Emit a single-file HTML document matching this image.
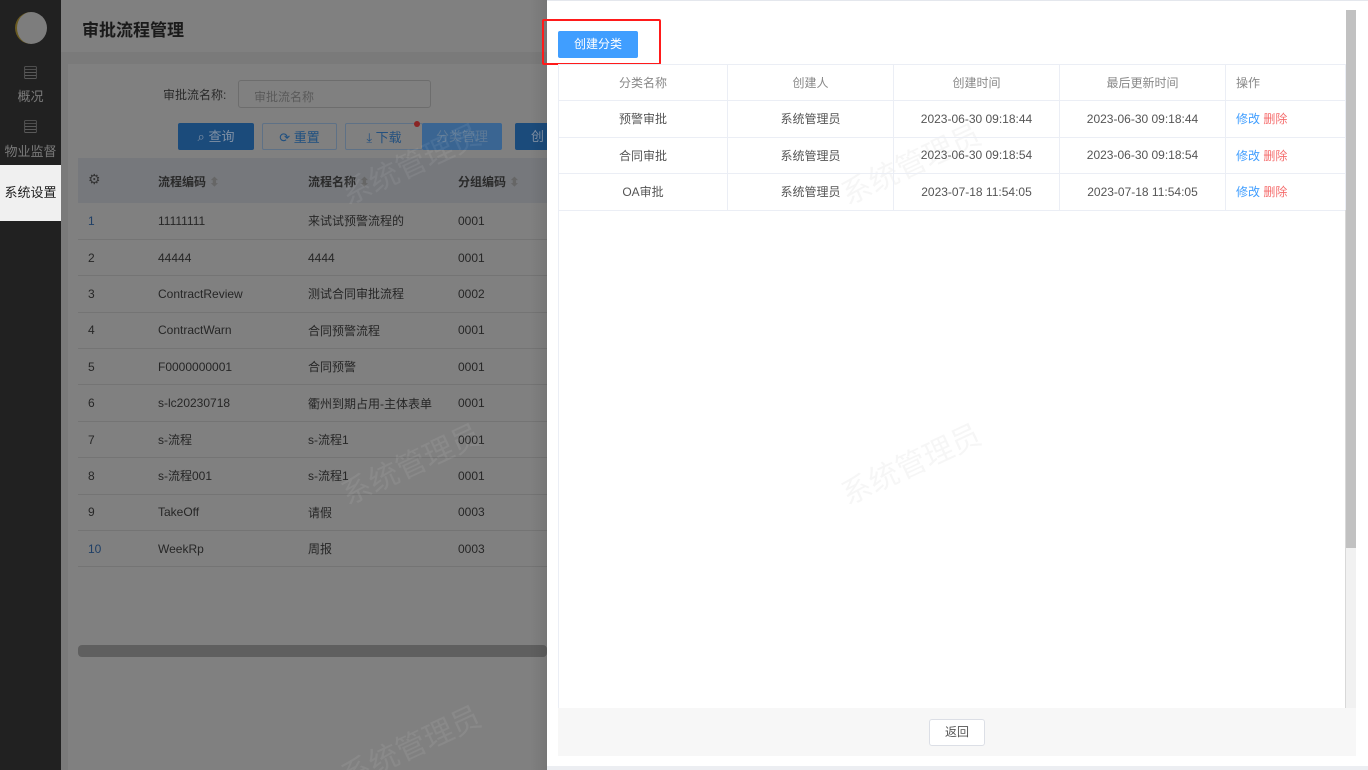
<!DOCTYPE html>
<html style="overflow:hidden;width:1368px;height:770px"><head><meta charset="utf-8"><style>
*{margin:0;padding:0;box-sizing:border-box}
body{width:1368px;height:770px;overflow:hidden;position:relative;background:#7a7a7a;font-family:"Liberation Sans","Noto Sans CJK SC",sans-serif;font-size:12px;color:#333}
.a{position:absolute}
.side{left:0;top:0;width:61px;height:770px;background:#212121}
.nav{color:#7a7a7a;font-size:13px;text-align:center;width:61px}
.lt td{height:36.4px;border-bottom:1px solid #747474;color:#262626}
table{border-collapse:collapse}
.rt{left:558px;top:64px;width:788px;border:1px solid #e8eaee}
.rt td,.rt th{border:1px solid #ebeef5;height:36.5px;text-align:center;font-weight:normal;color:#555;font-size:12px}
.rt th{color:#888;height:36px}
.rt td.op{text-align:left;padding-left:10px}
.bl{color:#409eff}.rd{color:#f56c6c}
.btn{border-radius:2px;height:27px;line-height:27px;text-align:center;font-size:13px}
.wm{position:absolute;font-size:30px;transform:rotate(-25deg);white-space:nowrap}
</style></head><body>
<div class="a side"></div>
<div class="a" style="left:15px;top:12px;width:32px;height:32px;border-radius:50%;background:#7d7d7d;border-left:2px solid #6a5a20"></div>
<div class="a nav" style="top:62px;font-size:15px">▤</div>
<div class="a nav" style="top:86px">概况</div>
<div class="a nav" style="top:116px;font-size:15px">▤</div>
<div class="a nav" style="top:141px">物业监督</div>
<div class="a" style="left:0;top:165px;width:61px;height:56px;background:#f0f0f0;color:#222;font-size:13px;line-height:56px;text-align:center">系统设置</div>
<div class="a" style="left:61px;top:0;width:486px;height:52px;background:#808080"></div>
<div class="a" style="left:82px;top:16px;font-size:17px;font-weight:bold;color:#1a1a1a">审批流程管理</div>
<div class="a" style="left:68px;top:64px;width:479px;height:706px;background:#808080"></div>
<div class="a" style="left:163px;top:86px;color:#2a2a2a">审批流名称:</div>
<div class="a" style="left:238px;top:80px;width:193px;height:28px;border:1px solid #6d6d6d;border-radius:3px;color:#5a5a5a;padding:7px 15px">审批流名称</div>
<div class="a btn" style="left:178px;top:123px;width:76px;background:#1b4b7b;color:#8090a4">⌕ 查询</div>
<div class="a btn" style="left:262px;top:123px;width:75px;border:1px solid #5e7186;color:#1e4f80">⟳ 重置</div>
<div class="a btn" style="left:345px;top:123px;width:78px;border:1px solid #5e7186;color:#23507f">⤓ 下载</div>
<div class="a" style="left:414px;top:121px;width:6px;height:6px;border-radius:50%;background:#8a2525"></div>
<div class="a btn" style="left:422px;top:123px;width:80px;background:#3a6592;color:#5e7a96">分类管理</div>
<div class="a btn" style="left:515px;top:123px;width:40px;background:#1b4b7b;color:#8090a4;text-align:left;padding-left:16px">创</div>
<div class="a" style="left:78px;top:158px;width:469px;height:45px;background:#76787c"></div>
<div class="a" style="left:88px;top:171px;font-size:14px;color:#333">⚙</div>
<div class="a" style="left:158px;top:173px;font-weight:bold;color:#2a2a2a">流程编码 <span style="color:#666">⬍</span></div>
<div class="a" style="left:308px;top:173px;font-weight:bold;color:#2a2a2a">流程名称 <span style="color:#666">⬍</span></div>
<div class="a" style="left:458px;top:173px;font-weight:bold;color:#2a2a2a">分组编码 <span style="color:#666">⬍</span></div>
<table class="a lt" style="left:78px;top:203px;width:469px">
<tr><td style="width:80px;padding-left:10px;color:#1f3f66">1</td><td style="width:150px">11111111</td><td style="width:150px">来试试预警流程的</td><td>0001</td></tr>
<tr><td style="padding-left:10px">2</td><td>44444</td><td>4444</td><td>0001</td></tr>
<tr><td style="padding-left:10px">3</td><td>ContractReview</td><td>测试合同审批流程</td><td>0002</td></tr>
<tr><td style="padding-left:10px">4</td><td>ContractWarn</td><td>合同预警流程</td><td>0001</td></tr>
<tr><td style="padding-left:10px">5</td><td>F0000000001</td><td>合同预警</td><td>0001</td></tr>
<tr><td style="padding-left:10px">6</td><td>s-lc20230718</td><td>衢州到期占用-主体表单</td><td>0001</td></tr>
<tr><td style="padding-left:10px">7</td><td>s-流程</td><td>s-流程1</td><td>0001</td></tr>
<tr><td style="padding-left:10px">8</td><td>s-流程001</td><td>s-流程1</td><td>0001</td></tr>
<tr><td style="padding-left:10px">9</td><td>TakeOff</td><td>请假</td><td>0003</td></tr>
<tr><td style="padding-left:10px;color:#1f3f66">10</td><td>WeekRp</td><td>周报</td><td>0003</td></tr>
</table>
<div class="a" style="left:78px;top:645px;width:469px;height:12px;background:#5f5f5f;border-radius:4px"></div>
<div class="wm" style="left:335px;top:140px;color:rgba(255,255,255,.07)">系统管理员</div>
<div class="wm" style="left:335px;top:440px;color:rgba(255,255,255,.07)">系统管理员</div>
<div class="wm" style="left:335px;top:722px;color:rgba(255,255,255,.07)">系统管理员</div>
<div class="a" style="left:530px;top:0;width:17px;height:770px;background:linear-gradient(90deg,rgba(0,0,0,0),rgba(0,0,0,.08))"></div>
<!-- panel -->
<div class="a" style="left:547px;top:0;width:821px;height:770px;background:#fff;border-top:1px solid #e4e7ed;overflow:hidden"></div>
<div class="wm" style="left:835px;top:140px;color:rgba(0,0,0,.035)">系统管理员</div>
<div class="wm" style="left:835px;top:440px;color:rgba(0,0,0,.035)">系统管理员</div>
<div class="a" style="left:1346px;top:10px;width:10px;height:538px;background:#c1c1c1"></div>
<div class="a" style="left:1346px;top:548px;width:10px;height:160px;background:#f1f1f1"></div>
<div class="a" style="left:542px;top:19px;width:119px;height:46px;border:2px solid #ff1a1a;border-radius:2px"></div>
<div class="a btn" style="left:558px;top:31px;width:80px;background:#409eff;color:#fff;font-size:12px;line-height:27px">创建分类</div>
<table class="a rt">
<tr><th style="width:169px">分类名称</th><th style="width:166px">创建人</th><th style="width:166px">创建时间</th><th style="width:166px">最后更新时间</th><th style="text-align:left;padding-left:10px">操作</th></tr>
<tr><td>预警审批</td><td>系统管理员</td><td>2023-06-30 09:18:44</td><td>2023-06-30 09:18:44</td><td class="op"><span class="bl">修改</span> <span class="rd">删除</span></td></tr>
<tr><td>合同审批</td><td>系统管理员</td><td>2023-06-30 09:18:54</td><td>2023-06-30 09:18:54</td><td class="op"><span class="bl">修改</span> <span class="rd">删除</span></td></tr>
<tr><td>OA审批</td><td>系统管理员</td><td>2023-07-18 11:54:05</td><td>2023-07-18 11:54:05</td><td class="op"><span class="bl">修改</span> <span class="rd">删除</span></td></tr>
</table>
<div class="a" style="left:558px;top:210px;width:1px;height:498px;background:#ebeef5"></div>
<div class="a" style="left:1345px;top:210px;width:1px;height:498px;background:#d8d8d8"></div>
<div class="a" style="left:558px;top:708px;width:798px;height:48px;background:#f7f7f7"></div>
<div class="a" style="left:929px;top:719px;width:56px;height:27px;border:1px solid #dcdfe6;border-radius:3px;background:#fff;text-align:center;line-height:25px;color:#555">返回</div>
<div class="a" style="left:547px;top:766px;width:821px;height:4px;background:#eceef2"></div>
</body></html>
